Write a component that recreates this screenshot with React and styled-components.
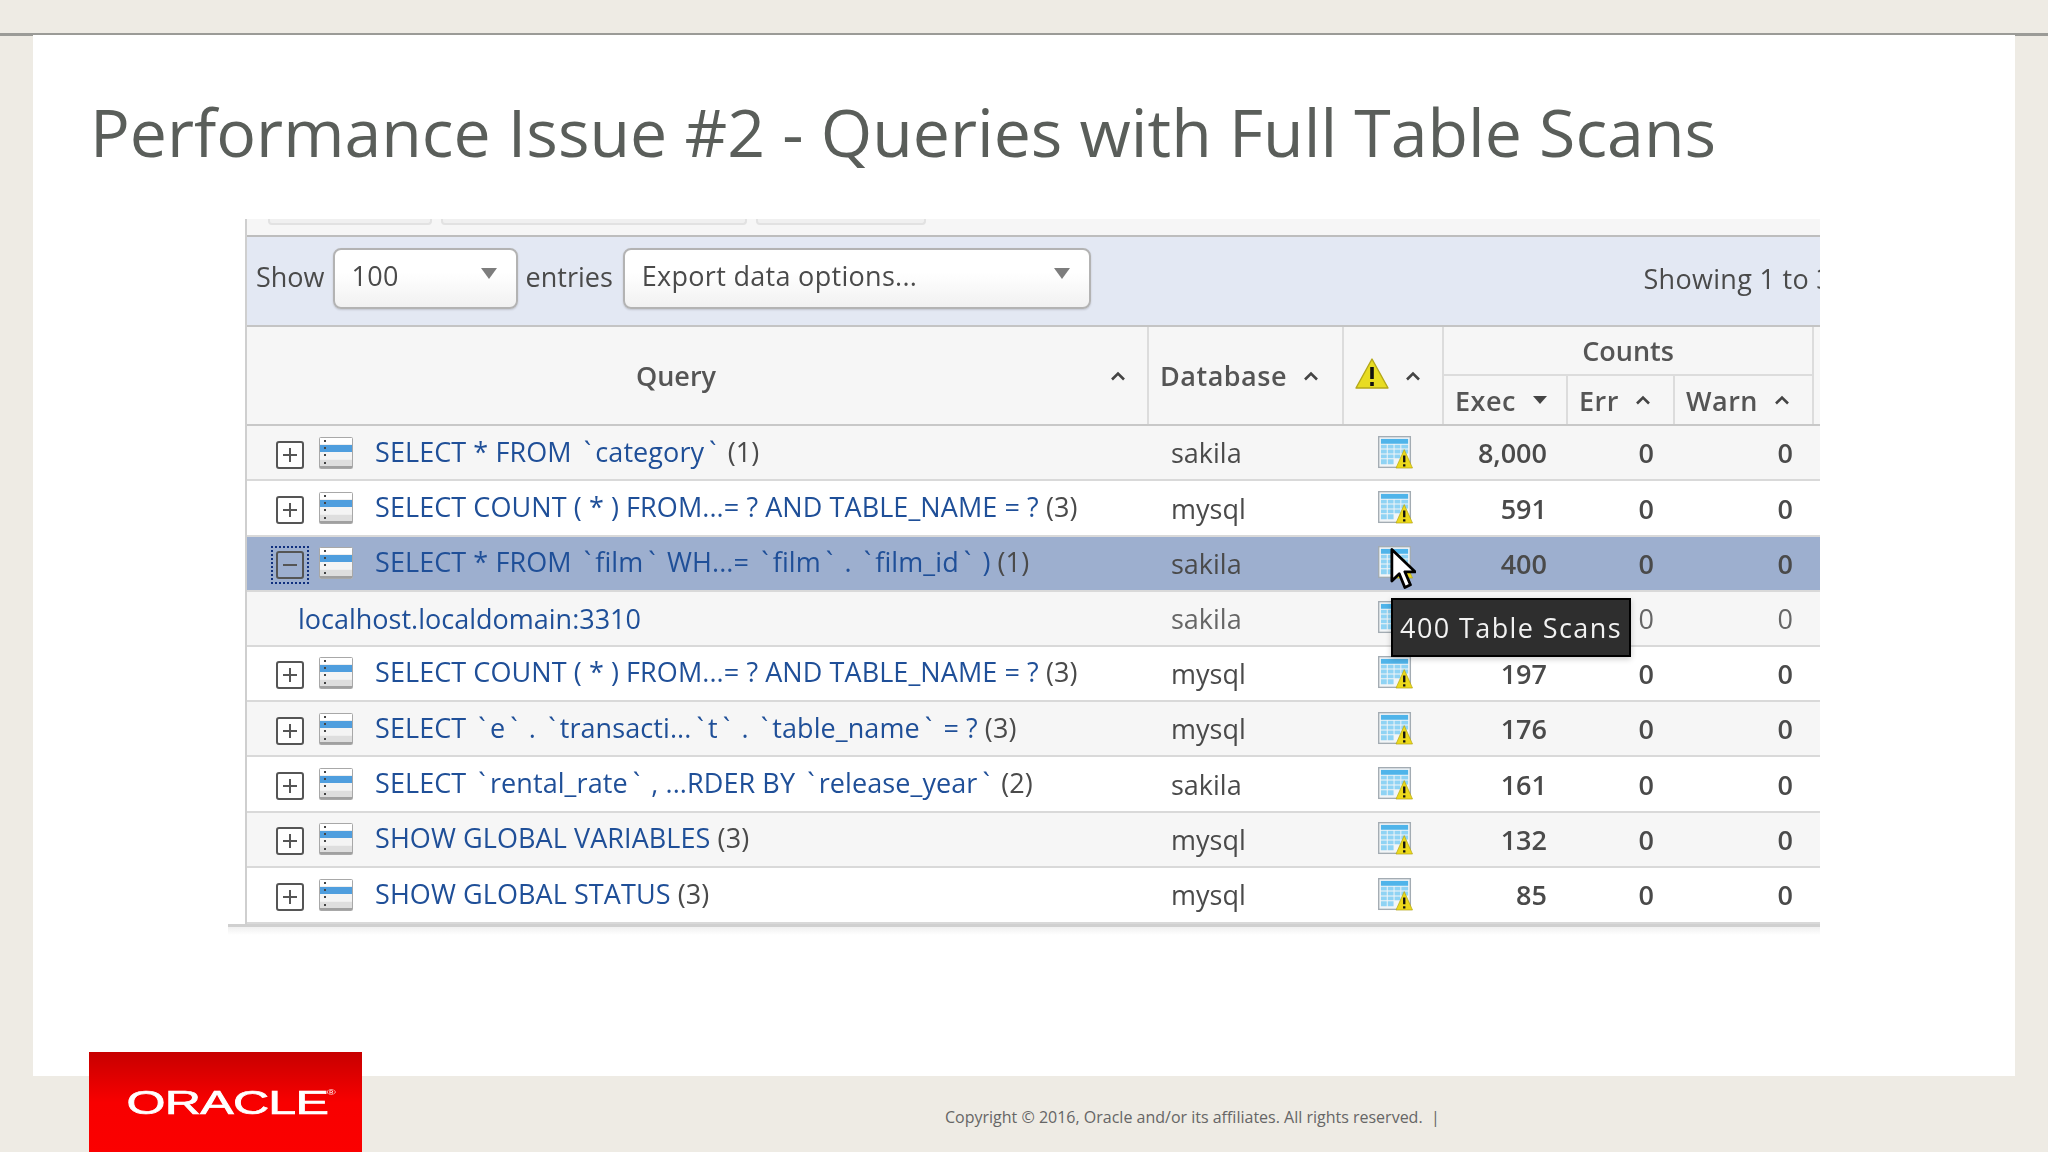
import styled, { createGlobalStyle } from 'styled-components';

const COLUMNS = '902px 195px 100px 124px 107px 139px 7px';

const rows = [
  { sql: 'SELECT * FROM `category`', n: 1, db: 'sakila', exec: '8,000', striped: true },
  { sql: 'SELECT COUNT ( * ) FROM...= ? AND TABLE_NAME = ?', n: 3, db: 'mysql', exec: '591' },
  { sql: 'SELECT * FROM `film` WH...= `film` . `film_id` )', n: 1, db: 'sakila', exec: '400', selected: true },
  { host: 'localhost.localdomain:3310', db: 'sakila', exec: '', striped: true },
  { sql: 'SELECT COUNT ( * ) FROM...= ? AND TABLE_NAME = ?', n: 3, db: 'mysql', exec: '197' },
  { sql: 'SELECT `e` . `transacti...`t` . `table_name` = ?', n: 3, db: 'mysql', exec: '176', striped: true },
  { sql: 'SELECT `rental_rate` , ...RDER BY `release_year`', n: 2, db: 'sakila', exec: '161' },
  { sql: 'SHOW GLOBAL VARIABLES', n: 3, db: 'mysql', exec: '132', striped: true },
  { sql: 'SHOW GLOBAL STATUS', n: 3, db: 'mysql', exec: '85' },
];

// backticks sit wider apart in the reference font
function SqlText({ sql }) {
  const parts = sql.split('`');
  return parts.map((part, i) => (
    <span key={i}>
      {i > 0 && <Tick>`</Tick>}
      {part}
    </span>
  ));
}

function SortUp() {
  return (
    <svg width="16" height="10" viewBox="0 0 16 10">
      <path d="M2 8.5 L8 2.5 L14 8.5" fill="none" stroke="#444" strokeWidth="2.6" />
    </svg>
  );
}

function SortDown() {
  return (
    <svg width="16" height="10" viewBox="0 0 16 10">
      <path d="M1 1 H15 L8 9 Z" fill="#444" />
    </svg>
  );
}

function SelectArrow() {
  return (
    <svg width="16" height="11" viewBox="0 0 16 11">
      <path d="M0 0 H16 L8 11 Z" fill="#7d7d7d" />
    </svg>
  );
}

function ExpandBox({ open }) {
  return (
    <svg width="28" height="28" viewBox="0 0 28 28">
      <rect x="1" y="1" width="26" height="26" rx="2" fill={open ? 'none' : '#fff'} stroke="#555" strokeWidth="2" />
      <path d={open ? 'M7 14 H21' : 'M7 14 H21 M14 7 V21'} stroke="#555" strokeWidth="2" />
    </svg>
  );
}

function ServerIcon() {
  return (
    <svg width="34" height="32" viewBox="0 0 34 32">
      <rect x="0.5" y="0.5" width="33" height="31" rx="1" fill="#efefef" stroke="#a8a8a8" />
      <rect x="1" y="1" width="32" height="6" fill="#fff" />
      <rect x="1" y="8" width="32" height="7" fill="#4f9ede" />
      <rect x="1" y="15" width="32" height="7" fill="#f4f4f4" />
      <rect x="1" y="23" width="32" height="6" fill="#dedede" />
      <rect x="1" y="29" width="32" height="2" fill="#a0a0a0" />
      <path d="M5 4h2M5 11h2M5 18h2M5 26h2" stroke="#444" strokeWidth="2" />
    </svg>
  );
}

function ScanIcon() {
  return (
    <svg width="35" height="33" viewBox="0 0 36 34">
      <rect x="0.7" y="0.7" width="32.6" height="31.6" fill="#f2f5f7" stroke="#a3acb3" strokeWidth="1.4" />
      <rect x="3" y="3" width="28" height="5" fill="#4fb4ea" />
      <path
        d="M3 9h6v4H3zM10 9h6v4h-6zM17 9h6v4h-6zM24 9h7v4h-7zM3 14h6v4H3zM10 14h6v4h-6zM17 14h6v4h-6zM24 14h7v4h-7zM3 19h6v4H3zM10 19h6v4h-6zM17 19h6v4h-6zM3 24h6v5H3zM10 24h6v5h-6z"
        fill="#8fd3f4"
      />
      <path d="M27 14 L35.5 33 H18.5 Z" fill="#ecd91c" stroke="#b3a412" strokeWidth="0.7" />
      <path d="M27 20 V27 M27 29 V31.5" stroke="#111" strokeWidth="2.4" />
    </svg>
  );
}

function WarningIcon() {
  return (
    <svg width="34" height="32" viewBox="0 0 34 32">
      <path d="M17 1 L33 30 H1 Z" fill="#e8dc22" stroke="#b5a81a" strokeWidth="1.4" strokeLinejoin="round" />
      <path d="M17 9 V21 M17 24 V28" stroke="#111" strokeWidth="3.6" />
    </svg>
  );
}

function Pointer() {
  return (
    <svg width="26" height="44" viewBox="0 0 28 46">
      <path
        d="M2 2 V36 L10 28 L16 43 L22 40 L16 26 H27 Z"
        fill="#fff"
        stroke="#000"
        strokeWidth="3"
        strokeLinejoin="round"
      />
    </svg>
  );
}

export default function App() {
  return (
    <>
      <GlobalStyle />
      <TopBar />
      <Slide>
        <Title>Performance Issue #2 - Queries with Full Table Scans</Title>
        <PanelWrap>
          <Panel>
            <TabStrip>
              <Tab $w={164} />
              <Tab $w={306} />
              <Tab $w={170} />
            </TabStrip>
            <FilterBar>
              <FilterLabel>Show</FilterLabel>
              <Select $w={185}>
                100
                <SelectArrow />
              </Select>
              <FilterLabel $after={2}>entries</FilterLabel>
              <Select $w={468}>
                Export data options...
                <SelectArrow />
              </Select>
              <Showing>Showing 1 to 3</Showing>
            </FilterBar>
            <HeaderGrid>
              <QueryHead>
                <QueryLabel>Query</QueryLabel>
                <SortUp />
              </QueryHead>
              <HeadCell $span>
                Database
                <SortUp />
              </HeadCell>
              <WarnHead>
                <WarningIcon />
                <SortUp />
              </WarnHead>
              <CountsCell>Counts</CountsCell>
              <HeadEnd />
              <HeadCell>
                Exec
                <SortDown />
              </HeadCell>
              <HeadCell>
                Err
                <SortUp />
              </HeadCell>
              <HeadCell>
                Warn
                <SortUp />
              </HeadCell>
            </HeaderGrid>
            {rows.map((row, i) => (
              <Row key={i} $striped={row.striped} $selected={row.selected} $sub={!!row.host}>
                {row.host ? (
                  <QueryCell>
                    <HostLink>{row.host}</HostLink>
                  </QueryCell>
                ) : (
                  <QueryCell>
                    <ExpandWrap $focused={row.selected}>
                      <ExpandBox open={row.selected} />
                    </ExpandWrap>
                    <ServerIcon />
                    <QueryText>
                      <SqlLink>
                        <SqlText sql={row.sql} />
                      </SqlLink>{' '}
                      ({row.n})
                    </QueryText>
                  </QueryCell>
                )}
                <DbCell>{row.db}</DbCell>
                <IconCell>
                  <ScanIcon />
                </IconCell>
                <NumCell $bold>{row.exec}</NumCell>
                <NumCell $bold={!row.host}>0</NumCell>
                <NumCell $bold={!row.host}>0</NumCell>
              </Row>
            ))}
            <CursorSpot>
              <Pointer />
            </CursorSpot>
            <Tooltip>400 Table Scans</Tooltip>
          </Panel>
          <PanelFloor />
        </PanelWrap>
      </Slide>
      <Footer>
        <Logo>
          <LogoWord>
            ORACLE<LogoMark>®</LogoMark>
          </LogoWord>
        </Logo>
        <Copyright>Copyright © 2016, Oracle and/or its affiliates. All rights reserved. &nbsp;|</Copyright>
      </Footer>
    </>
  );
}

const GlobalStyle = createGlobalStyle`
  html, body {
    margin: 0;
    padding: 0;
    width: 2048px;
    height: 1152px;
    overflow: hidden;
    background: #eeebe4;
    font-family: "Open Sans", "Noto Sans", sans-serif;
  }
`;

const TopBar = styled.div`
  height: 33px;
  border-bottom: 3px solid #9b9b97;
  box-sizing: content-box;
`;

const Slide = styled.main`
  margin: -1px 33px 0;
  height: 1041px;
  background: #fff;
  box-sizing: border-box;
`;

const Title = styled.h1`
  margin: 0;
  height: 184px;
  padding: 48px 0 0 57px;
  box-sizing: border-box;
  font-size: 66.2px;
  line-height: 96px;
  font-weight: 400;
  color: #5a5e5a;
  white-space: nowrap;
`;

const PanelWrap = styled.div`
  margin-left: 195px;
  width: 1592px;
`;

const Panel = styled.section`
  position: relative;
  margin-left: 17px;
  width: 1575px;
  overflow: hidden;
  border-left: 2px solid #cfcfcf;
  box-sizing: border-box;
  color: #4a4a4a;
  filter: blur(0.4px);
`;

const PanelFloor = styled.div`
  height: 8px;
  border-top: 3px solid #d0d0d0;
  background: linear-gradient(#f0f0f0, #fff);
`;

const TabStrip = styled.div`
  display: flex;
  gap: 9px;
  height: 16px;
  padding-left: 21px;
  background: #f6f6f6;
  border-bottom: 2px solid #bdbdbd;
`;

const Tab = styled.div`
  width: ${(p) => p.$w}px;
  height: 6px;
  box-sizing: border-box;
  background: #f0f0f0;
  border: 2px solid #e2e2e2;
  border-top: 0;
  border-radius: 0 0 4px 4px;
`;

const FilterBar = styled.div`
  display: flex;
  align-items: center;
  height: 90px;
  padding: 0 0 6px 9px;
  box-sizing: border-box;
  gap: 8px;
  background: #e3e8f3;
  border-bottom: 2px solid #c4c4c4;
  font-size: 27px;
  white-space: nowrap;
`;

const FilterLabel = styled.span`
  margin-bottom: 4px;
  margin-right: ${(p) => p.$after || 0}px;
`;

const Select = styled.div`
  display: flex;
  align-items: center;
  justify-content: space-between;
  width: ${(p) => p.$w}px;
  height: 61px;
  padding: 0 19px 6px 17px;
  box-sizing: border-box;
  letter-spacing: 0.3px;
  background: linear-gradient(#fff 40%, #f1f1f1);
  border: 2px solid #b3b3b3;
  border-radius: 8px;
  box-shadow: 0 1px 2px rgba(0, 0, 0, 0.15);

  svg {
    margin-top: -4px;
  }
`;

const Showing = styled.span`
  margin-left: auto;
  margin-right: -12px;
  letter-spacing: 0.3px;
`;

const HeaderGrid = styled.div`
  display: grid;
  grid-template-columns: ${COLUMNS};
  grid-template-rows: 49px 48px;
  background: #f6f6f6;
  border-bottom: 2px solid #c8c8c8;
  font-size: 27px;
  font-weight: 600;
  color: #555;
`;

const HeadCell = styled.div`
  display: flex;
  align-items: center;
  gap: 16px;
  padding: 0 11px;
  box-sizing: border-box;
  letter-spacing: 0.5px;
  border-right: 2px solid #dcdcdc;
  ${(p) => p.$span && 'grid-row: span 2;'}
`;

const QueryHead = styled(HeadCell)`
  grid-row: span 2;
  padding-right: 21px;
`;

const WarnHead = styled(HeadCell)`
  grid-row: span 2;

  svg:first-child {
    margin-top: -3px;
  }
`;

const QueryLabel = styled.span`
  flex: 1;
  text-align: center;
  letter-spacing: 0;
`;

const CountsCell = styled.div`
  grid-column: 4 / span 3;
  display: flex;
  align-items: center;
  justify-content: center;
  border-bottom: 2px solid #dcdcdc;
  border-right: 2px solid #dcdcdc;
`;

const HeadEnd = styled.div`
  grid-row: span 2;
`;

const Row = styled.div`
  display: grid;
  grid-template-columns: ${COLUMNS};
  align-items: center;
  height: ${(p) => (p.$sub ? 54.4 : 55.4)}px;
  box-sizing: border-box;
  font-size: 27px;
  border-bottom: 2px solid #d9d9d9;
  background: ${(p) => (p.$selected ? '#9dafcf' : p.$striped ? '#f6f6f6' : '#fff')};
  color: ${(p) => (p.$sub ? '#666' : '#4a4a4a')};
`;

const QueryCell = styled.div`
  display: flex;
  align-items: center;
  padding-left: 29px;
  gap: 15px;
  white-space: nowrap;
`;

const ExpandWrap = styled.div`
  display: flex;
  width: 28px;
  height: 28px;
  margin-top: 4px;
  outline: ${(p) => (p.$focused ? '2px dotted #10307e' : 'none')};
  outline-offset: 3px;
`;

const QueryText = styled.span`
  margin-left: 7px;
  margin-top: -3px;
  letter-spacing: 0.08px;
`;

const SqlLink = styled.span`
  color: #1f4f98;
`;

const Tick = styled.span`
  padding: 0 4px 0 5px;
`;

const HostLink = styled.span`
  color: #1f4f98;
  margin-left: 22px;
`;

const DbCell = styled.div`
  padding-left: 22px;
`;

const IconCell = styled.div`
  display: flex;
  padding-left: 34px;
  margin-top: -1px;
`;

const NumCell = styled.div`
  padding-right: 21px;
  text-align: right;
  font-weight: ${(p) => (p.$bold ? 600 : 400)};
`;

const CursorSpot = styled.div`
  position: absolute;
  left: 1143px;
  top: 328px;
`;

const Tooltip = styled.div`
  position: absolute;
  left: 1144px;
  top: 379px;
  width: 240px;
  height: 59px;
  box-sizing: border-box;
  display: flex;
  align-items: center;
  justify-content: center;
  background: #2e2e2e;
  border: 2px solid #000;
  box-shadow: 0 2px 6px rgba(0, 0, 0, 0.2);
  color: #f2f2f2;
  font-size: 27px;
  letter-spacing: 1.4px;
  white-space: nowrap;
`;

const Footer = styled.footer`
  display: flex;
  align-items: flex-end;
  height: 77px;
  padding-left: 89px;
`;

const Logo = styled.div`
  flex: none;
  width: 273px;
  height: 101px;
  margin-top: -24px;
  display: flex;
  align-items: center;
  justify-content: center;
  background: linear-gradient(#c70000, #f80000 50%, #fb0000);
`;

const LogoWord = styled.span`
  position: relative;
  font-family: "Liberation Sans", sans-serif;
  font-size: 33px;
  font-weight: 400;
  -webkit-text-stroke: 0.7px #fff;
  color: #fff;
  transform: scaleX(1.52);
  letter-spacing: -0.5px;
  margin: 0 0 0 4px;
`;

const LogoMark = styled.span`
  position: absolute;
  left: 100%;
  top: 4px;
  margin-left: -1px;
  font-size: 8px;
  -webkit-text-stroke: 0;
`;

const Copyright = styled.div`
  margin: 0 0 25px 583px;
  font-size: 16px;
  color: #666;
  white-space: nowrap;
`;
